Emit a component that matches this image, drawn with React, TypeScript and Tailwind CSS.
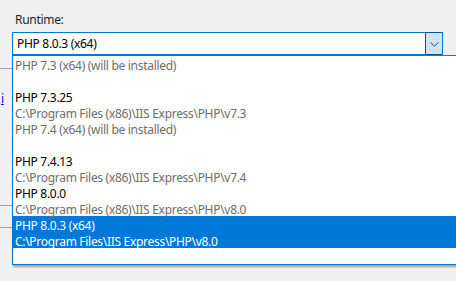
import React from "react";

const items = [
  { title: "PHP 7.3 (x64) (will be installed)", sub: "", install: true },
  { title: "PHP 7.3.25", sub: "C:\\Program Files (x86)\\IIS Express\\PHP\\v7.3", install: false },
  { title: "PHP 7.4 (x64) (will be installed)", sub: "", install: true },
  { title: "PHP 7.4.13", sub: "C:\\Program Files (x86)\\IIS Express\\PHP\\v7.4", install: false },
  { title: "PHP 8.0.0", sub: "C:\\Program Files (x86)\\IIS Express\\PHP\\v8.0", install: false },
  { title: "PHP 8.0.3 (x64)", sub: "C:\\Program Files\\IIS Express\\PHP\\v8.0", install: false, selected: true },
];

export default function App() {
  return (
    <div
      className="relative w-[456px] h-[281px] overflow-hidden bg-[#f0f0f0] text-[12px] leading-[16px] tracking-[-0.3px] text-[#1e1e1e]"
      style={{ fontFamily: '"Noto Sans", "Segoe UI", sans-serif' }}
    >
      {/* background content partly hidden by the popup */}
      <div className="absolute left-0 top-0 w-[12px] flex flex-col">
        <div className="mt-[68px] h-px bg-[#a0a0a0]" />
        <div className="mt-[22px] pl-[1px] text-[#0000ee] underline">i</div>
        <div className="mt-[98px] h-px bg-[#a0a0a0]" />
        <div className="mt-[21px] h-px bg-[#a0a0a0]" />
      </div>

      <div className="pl-[15px] pt-[12px] h-[32px]">Runtime:</div>
      <div className="ml-[12px] w-[431px] h-[23px] border border-[#0078d7] bg-white flex items-stretch">
        <div className="flex-1 pl-[4px] pt-px flex items-center text-black">PHP 8.0.3 (x64)</div>
        <div className="w-[17px] border-l border-[#005499] bg-[#cce4f7] flex items-center justify-center -mt-px -mb-px border-t border-b">
          <svg width="9" height="5" viewBox="0 0 9 5" className="mt-[1px]">
            <path d="M0.5 0.5 L4.5 4.2 L8.5 0.5" stroke="#444" strokeWidth="1" fill="none" />
          </svg>
        </div>
      </div>

      {/* dropdown popup */}
      <div className="absolute left-[12px] top-[55px] w-[460px] h-[210px] border border-[#0078d7] bg-white shadow-[1px_2px_2px_rgba(0,0,0,0.35)]">
        {items.map((it) => (
          <div
            key={it.title}
            className={`h-[32px] pl-[2px] pt-[2px] ${it.selected ? "bg-[#0078d7] text-white" : ""}`}
          >
            <div className={`h-[16px] whitespace-nowrap ${it.selected ? "text-white" : it.install ? "text-[#6d6d6d]" : "text-black"}`}>
              {it.title}
            </div>
            <div className={`h-[14px] whitespace-nowrap ${it.selected ? "text-white" : "text-[#6d6d6d]"}`}>{it.sub}</div>
          </div>
        ))}
      </div>
    </div>
  );
}
